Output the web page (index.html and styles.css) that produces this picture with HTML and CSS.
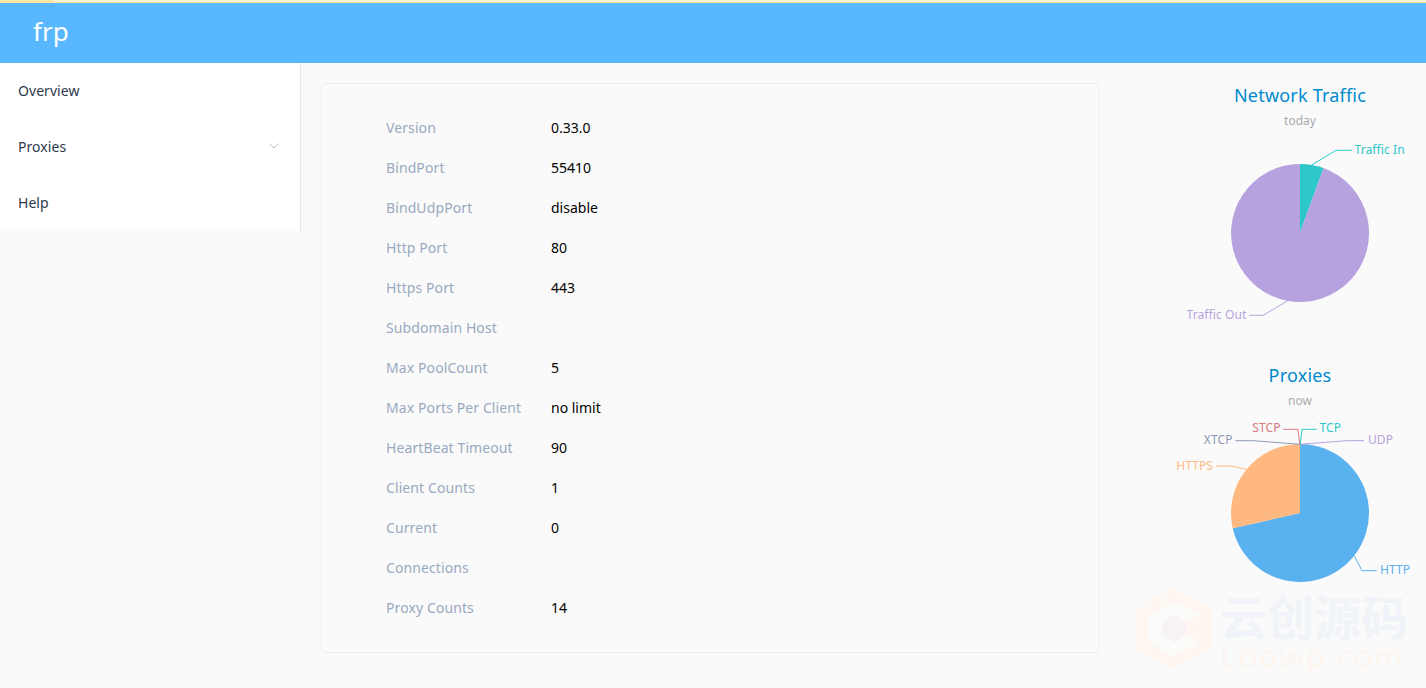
FILE: index.html
```html
<!DOCTYPE html>
<html lang="en">
<head>
    <meta charset="UTF-8">
    <meta name="viewport" content="width=device-width, initial-scale=1.0">
    <title>frp</title>
    <link rel="stylesheet" href="styles.css">
</head>
<body>
    <div class="topline"><div class="topline-tab"></div></div>
    <header class="navbar">
        <span class="brand">frp</span>
    </header>
    <div class="layout">
        <aside class="sidebar">
            <ul class="menu">
                <li class="menu-item">Overview</li>
                <li class="menu-item">Proxies
                    <svg class="menu-arrow" width="10" height="6" viewBox="0 0 10 6"><path d="M0.5 0.5 L5 5 L9.5 0.5" fill="none" stroke="#b4bfcd" stroke-width="1"/></svg>
                </li>
                <li class="menu-item">Help</li>
            </ul>
        </aside>
        <main class="content">
            <section class="card">
                <div class="row"><span class="key">Version</span><span class="val">0.33.0</span></div>
                <div class="row"><span class="key">BindPort</span><span class="val">55410</span></div>
                <div class="row"><span class="key">BindUdpPort</span><span class="val">disable</span></div>
                <div class="row"><span class="key">Http Port</span><span class="val">80</span></div>
                <div class="row"><span class="key">Https Port</span><span class="val">443</span></div>
                <div class="row"><span class="key">Subdomain Host</span><span class="val"></span></div>
                <div class="row"><span class="key">Max PoolCount</span><span class="val">5</span></div>
                <div class="row"><span class="key">Max Ports Per Client</span><span class="val">no limit</span></div>
                <div class="row"><span class="key">HeartBeat Timeout</span><span class="val">90</span></div>
                <div class="row"><span class="key">Client Counts</span><span class="val">1</span></div>
                <div class="row"><span class="key">Current</span><span class="val">0</span></div>
                <div class="row"><span class="key">Connections</span><span class="val"></span></div>
                <div class="row"><span class="key">Proxy Counts</span><span class="val">14</span></div>
            </section>
            <section class="charts">
                <svg class="chart" width="326" height="280" viewBox="1100 63 326 280">
                    <text class="chart-title" x="1300" y="102">Network Traffic</text>
                    <text class="chart-sub" x="1300" y="125">today</text>
                    <path d="M1300 233 L1300 164 A69 69 0 0 1 1323.5 168.1 Z" fill="#2ec7c9"/>
                    <path d="M1300 233 L1323.5 168.1 A69 69 0 1 1 1300 164 Z" fill="#b6a2de"/>
                    <polyline class="lead" points="1311.7,165 1336,150.3 1351.7,150.3" stroke="#2ec7c9"/>
                    <polyline class="lead" points="1287.7,300.7 1263.3,315.3 1249.3,315.3" stroke="#b6a2de"/>
                    <text class="pie-label" x="1354.5" y="154" fill="#2ec7c9">Traffic In</text>
                    <text class="pie-label end" x="1246.5" y="319" fill="#b6a2de">Traffic Out</text>
                </svg>
                <svg class="chart" width="326" height="280" viewBox="1100 343 326 280">
                    <text class="chart-title" x="1300" y="382">Proxies</text>
                    <text class="chart-sub" x="1300" y="405">now</text>
                    <path d="M1300 513 L1300 444 A69 69 0 1 1 1232.73 528.35 Z" fill="#5ab1ef"/>
                    <path d="M1300 513 L1232.73 528.35 A69 69 0 0 1 1300 444 Z" fill="#ffb980"/>
                    <polyline class="lead" points="1300,444.3 1346.7,440.7 1364,440.7" stroke="#b6a2de"/>
                    <polyline class="lead" points="1299.5,444.3 1253.3,440.7 1235.3,440.7" stroke="#8d98b3"/>
                    <polyline class="lead" points="1299.7,444.3 1298,429.3 1283.3,429.3" stroke="#d87a80"/>
                    <polyline class="lead" points="1300.3,444.3 1302,429.3 1316.7,429.3" stroke="#2ec7c9"/>
                    <polyline class="lead" points="1246,469.3 1230.7,466 1216,466" stroke="#ffb980"/>
                    <polyline class="lead" points="1354.3,555.7 1362,570.7 1376.7,570.7" stroke="#5ab1ef"/>
                    <text class="pie-label" x="1368" y="444" fill="#b6a2de">UDP</text>
                    <text class="pie-label" x="1319.5" y="432" fill="#2ec7c9">TCP</text>
                    <text class="pie-label end" x="1280.5" y="432" fill="#d87a80">STCP</text>
                    <text class="pie-label end" x="1232.5" y="444" fill="#8d98b3">XTCP</text>
                    <text class="pie-label end" x="1213" y="470" fill="#ffb980">HTTPS</text>
                    <text class="pie-label" x="1380" y="574" fill="#5ab1ef">HTTP</text>
                </svg>
            </section>
        </main>
    </div>
    <div class="watermark">
        <svg class="watermark-logo" width="76" height="82" viewBox="0 0 76 82">
            <path d="M38 0 L75 20 L75 61 L38 81 L1 61 L1 20 Z" fill="#fdf6f1"/>
            <path d="M38 13 L50 19.5 L63 27 L50 34 L38 27 L26 34 L26 47 L38 54 L50 47 L63 54 L38 68 L13 54 L13 27 Z" fill="#fbfbfa"/>
            <path d="M38 27 L50 34 L50 47 L38 54 L26 47 L26 34 Z" fill="#f7f2f3"/>
        </svg>
        <div class="watermark-text">
            <div class="watermark-cn">云创源码</div>
            <div class="watermark-en">Loowp.com</div>
        </div>
    </div>
</body>
</html>
```

FILE: styles.css
```css
* { box-sizing: border-box; }
html, body { height: 100%; }
body { margin: 0; height: 688px; overflow: hidden; position: relative; background-color: #fafafa; font-family: "Noto Sans", "Open Sans", sans-serif; font-size: 14px; }
.topline { height: 3px; background-color: #fdf3d0; border-bottom: 1px solid #f9e4a0; }
.topline-tab { width: 54px; height: 3px; background-color: #fbe6a6; }
.navbar { height: 60px; background-color: #58b7ff; display: flex; align-items: center; padding-left: 33px; }
.brand { color: #fff; font-size: 26px; line-height: 56px; margin-top: -4px; }
.layout { display: flex; align-items: flex-start; }
.sidebar { width: 301px; flex-shrink: 0; background-color: #fff; border-right: 1px solid #e6e6e6; }
.menu { list-style: none; margin: 0; padding: 0; }
.menu-item { height: 56px; line-height: 56px; padding: 0 20px 0 18px; color: #2d3a4b; position: relative; letter-spacing: 0.05px; }
.menu-arrow { position: absolute; right: 21px; top: 24px; }
.content { flex: 1; display: flex; align-items: flex-start; padding: 20px 0 0 20px; }
.card { width: 779px; height: 570px; flex-shrink: 0; padding: 24px 0 0 64px; border: 1px solid #eaeefb; border-radius: 4px; }
.row { display: flex; height: 40px; line-height: 40px; }
.key { width: 165px; color: #99a9bf; letter-spacing: 0.1px; }
.val { color: #000; }
.charts { display: flex; flex-direction: column; margin-top: -20px; }
.chart { display: block; }
.chart-title { font-size: 18px; fill: #008acd; text-anchor: middle; letter-spacing: 0.2px; }
.chart-sub { font-size: 12px; fill: #aaa; text-anchor: middle; }
.pie-label { font-size: 12px; letter-spacing: 0.1px; }
.pie-label.end { text-anchor: end; }
.lead { fill: none; stroke-width: 1; }
.watermark { position: absolute; left: 1136px; top: 588px; display: flex; gap: 8px; pointer-events: none; }
.watermark-text { padding-top: 3px; }
.watermark-cn { font-family: "Noto Sans CJK SC", sans-serif; font-weight: 700; font-size: 47px; line-height: 47px; color: #f0f3f8; white-space: nowrap; }
.watermark-en { font-size: 31px; line-height: 30px; color: #fdf5ef; letter-spacing: 2px; white-space: nowrap; margin-top: 3px; }
```
